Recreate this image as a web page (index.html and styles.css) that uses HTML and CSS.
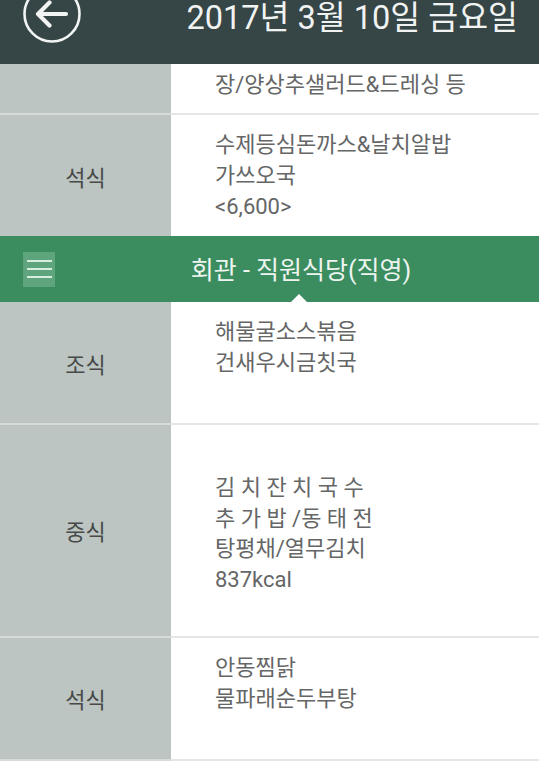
FILE: index.html
```
<!DOCTYPE html>
<html lang="ko">
<head>
<meta charset="utf-8">
<title>식단</title>
<link rel="stylesheet" href="styles.css">
</head>
<body>
<div class="screen">
  <header class="topbar">
    <svg class="back" width="60" height="60" viewBox="0 0 60 60" aria-label="뒤로">
      <circle cx="30" cy="30" r="27.5" fill="none" stroke="#f2f4f4" stroke-width="2.6"/>
      <path d="M16 30 H44 M16 30 L27.5 18.5 M16 30 L27.5 41.5" fill="none" stroke="#f2f4f4" stroke-width="4.2" stroke-linecap="round" stroke-linejoin="round"/>
    </svg>
    <h1 class="date">2017년 3월 10일 금요일</h1>
  </header>

  <section class="row row-cut">
    <div class="label"></div>
    <div class="menu">
      <div class="line">장/양상추샐러드&amp;드레싱 등</div>
    </div>
  </section>

  <section class="row row-last">
    <div class="label">석식</div>
    <div class="menu">
      <div class="line">수제등심돈까스&amp;날치알밥</div>
      <div class="line">가쓰오국</div>
      <div class="line">&lt;6,600&gt;</div>
    </div>
  </section>

  <div class="place">
    <div class="burger"><span></span><span></span><span></span></div>
    <div class="place-name">회관 - 직원식당(직영)</div>
  </div>

  <section class="row">
    <div class="label">조식</div>
    <div class="menu">
      <div class="line">해물굴소스볶음</div>
      <div class="line">건새우시금칫국</div>
    </div>
  </section>

  <section class="row">
    <div class="label">중식</div>
    <div class="menu menu-tall">
      <div class="line">&nbsp;</div>
      <div class="line">김 치 잔 치 국 수</div>
      <div class="line">추 가 밥 /동 태 전</div>
      <div class="line">탕평채/열무김치</div>
      <div class="line">837kcal</div>
      <div class="line">&nbsp;</div>
    </div>
  </section>

  <section class="row">
    <div class="label">석식</div>
    <div class="menu">
      <div class="line">안동찜닭</div>
      <div class="line">물파래순두부탕</div>
    </div>
  </section>
</div>
</body>
</html>
```

FILE: styles.css
```
html, body {
  margin: 0;
  padding: 0;
  background: #ffffff;
}

.screen {
  width: 539px;
  height: 761px;
  overflow: hidden;
  font-family: "Roboto", "Noto Sans CJK KR", sans-serif;
  background: #ffffff;
}

.topbar {
  height: 64px;
  background: #364545;
  display: flex;
  justify-content: space-between;
  align-items: flex-start;
  overflow: hidden;
}

.back {
  display: block;
  margin-top: -16px;
  margin-left: 22px;
  flex: none;
}

.date {
  margin: 0 21px 0 0;
  font-weight: 400;
  font-size: 32.5px;
  line-height: 36px;
  color: #f1f3f3;
  white-space: nowrap;
}

.row {
  display: grid;
  grid-template-columns: 171px 1fr;
}

.label {
  background: #bcc5c2;
  border-bottom: 2px solid #d5dbd9;
  display: flex;
  align-items: center;
  justify-content: center;
  font-size: 22px;
  color: #474a49;
  min-height: 121px;
}

.menu {
  border-bottom: 2px solid #e4e7e6;
  padding: 15px 0 11px 44px;
  min-height: 95px;
  font-size: 22px;
  line-height: 30.8px;
  color: #656666;
}

.menu-tall {
  padding-top: 17px;
  padding-bottom: 9px;
}

.row-cut .label,
.row-cut .menu {
  min-height: 0;
  height: 49px;
}

.row-cut .menu {
  padding-top: 6px;
  padding-bottom: 0;
  height: 43px;
}

.row-last .label,
.row-last .menu {
  border-bottom: none;
}

.place {
  height: 66px;
  background: #3b8d60;
  display: flex;
  align-items: center;
  position: relative;
}

.place::after {
  content: "";
  position: absolute;
  left: 291px;
  bottom: 0;
  border-left: 8px solid transparent;
  border-right: 8px solid transparent;
  border-bottom: 8px solid #ffffff;
}

.burger {
  width: 32px;
  height: 35px;
  margin-left: 23px;
  margin-right: 8px;
  background: #5ea47d;
  display: flex;
  flex-direction: column;
  justify-content: center;
  align-items: center;
  gap: 6px;
  flex: none;
}

.burger span {
  display: block;
  width: 25px;
  height: 2px;
  background: #d6ecdf;
}

.place-name {
  flex: 1;
  text-align: center;
  font-size: 25px;
  color: #eef5f1;
  padding-bottom: 2px;
}
```
